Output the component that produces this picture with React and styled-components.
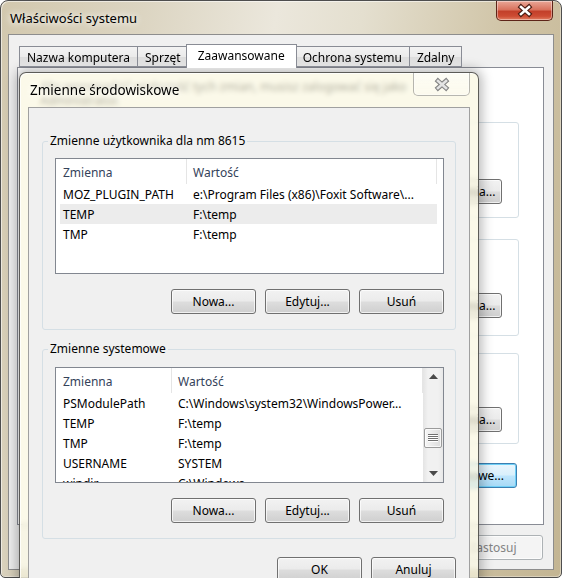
import React from "react";
import styled, { createGlobalStyle } from "styled-components";

const GlobalStyle = createGlobalStyle`
  html, body {
    margin: 0;
    padding: 0;
    background: #ffffff;
    overflow: hidden;
  }
  body {
    font-family: "Noto Sans", "Liberation Sans", sans-serif;
    font-size: 12px;
    color: #000;
  }
  * {
    box-sizing: border-box;
  }
`;

const Screen = styled.div`
  position: relative;
  width: 562px;
  height: 578px;
  overflow: hidden;
`;

// outer window: Właściwości systemu
const Window = styled.div`
  width: 562px;
  height: 578px;
  display: flex;
  flex-direction: column;
  padding: 0 7px 7px 7px;
  border: 1px solid #4e4e4e;
  border-radius: 8px 8px 5px 5px;
  background: linear-gradient(100deg, #d2c8ae 0%, #dcd5c2 22%, #ebe7dc 42%, #e4dfcf 55%, #cfc3a5 78%, #c3b593 100%);
  box-shadow: inset 1px 1px 0 rgba(255, 255, 255, 0.55), inset -1px -1px 0 rgba(255, 255, 255, 0.35);
`;

const TitleBar = styled.div`
  height: 33px;
  flex: none;
  display: flex;
  justify-content: space-between;
  align-items: flex-start;
`;

const Caption = styled.div`
  line-height: 35px;
  padding-left: 2px;
  font-size: ${(p) => p.$size}px;
  white-space: nowrap;
  text-shadow: 0 0 6px #fff, 0 0 10px rgba(255, 255, 255, 0.8);
`;

const CloseButton = styled.div`
  width: 57px;
  height: ${(p) => (p.$inactive ? 23 : 20)}px;
  margin-right: ${(p) => (p.$inactive ? 0 : 1)}px;
  display: flex;
  align-items: center;
  justify-content: center;
  border: 1px solid ${(p) => (p.$inactive ? "rgba(0, 0, 0, 0.28)" : "#5d2418")};
  border-top: none;
  border-radius: 0 0 5px 5px;
  background: ${(p) =>
    p.$inactive
      ? "linear-gradient(rgba(255,255,255,0.55), rgba(255,255,255,0.2))"
      : "linear-gradient(#e9a797 0%, #d9735e 45%, #c3402a 55%, #cd4c33 80%, #e27f63 100%)"};
  box-shadow: inset 0 0 0 1px rgba(255, 255, 255, 0.4);
`;

const Panel = styled.div`
  flex: 1;
  display: flex;
  flex-direction: column;
  background: #f0f0f0;
  border: 1px solid #8d8d8d;
  padding: 9px 9px 9px 8px;
`;

const TabStrip = styled.div`
  height: 23px;
  flex: none;
  display: flex;
  align-items: flex-end;
  padding-left: 2px;
  position: relative;
  z-index: 2;
`;

const Tab = styled.div`
  height: ${(p) => (p.$active ? 24 : 21)}px;
  margin: 0 ${(p) => (p.$active ? -2 : -1)}px ${(p) => (p.$active ? -1 : 0)}px ${(p) => (p.$active ? -2 : 0)}px;
  padding: ${(p) => (p.$active ? "0 11px 3px" : "2px 7px 0")};
  display: flex;
  align-items: center;
  white-space: nowrap;
  border: 1px solid #898c95;
  border-bottom: ${(p) => (p.$active ? "none" : "1px solid #898c95")};
  background: ${(p) =>
    p.$active ? "#ffffff" : "linear-gradient(#f3f3f3 0%, #ebebeb 50%, #dddddd 51%, #e2e2e2 100%)"};
  position: relative;
  z-index: ${(p) => (p.$active ? 2 : 1)};
`;

const TabPage = styled.div`
  flex: 1;
  display: flex;
  flex-direction: column;
  background: #ffffff;
  border: 1px solid #898c95;
  padding: 12px 24px 0 22px;
`;

const Info = styled.p`
  margin: 0;
  line-height: 14px;
`;

// group boxes of the tab page, mostly hidden under the dialog
const PageGroup = styled.div`
  margin-top: ${(p) => p.$mt}px;
  height: ${(p) => p.$h}px;
  display: flex;
  flex-direction: column;
  justify-content: flex-end;
  padding: 0 16px ${(p) => p.$pb}px 12px;
  border: 1px solid #d5dfe5;
  border-radius: 3px;
`;

const ButtonRow = styled.div`
  display: flex;
  justify-content: flex-end;
  gap: 9px;
  margin-top: ${(p) => p.$mt || 0}px;
  padding-right: ${(p) => p.$pr || 0}px;
  flex: none;
`;

const Button = styled.button`
  width: ${(p) => (p.$w ? `${p.$w}px` : "auto")};
  height: 25px;
  padding: 0 ${(p) => (p.$w ? 0 : 12)}px;
  display: flex;
  align-items: center;
  justify-content: center;
  font: inherit;
  white-space: nowrap;
  color: ${(p) => (p.disabled ? "#838383" : "#000")};
  border: 1px solid ${(p) => (p.$focus ? "#3c7fb1" : p.disabled ? "#adb2b5" : "#707070")};
  border-radius: 3px;
  background: ${(p) =>
    p.disabled
      ? "#f4f4f4"
      : p.$focus
      ? "linear-gradient(#eaf6fd 0%, #d9f0fc 48%, #bee6fd 52%, #a7d9f5 100%)"
      : "linear-gradient(#f2f2f2 0%, #ebebeb 48%, #dddddd 52%, #cfcfcf 100%)"};
  box-shadow: inset 0 0 0 1px ${(p) => (p.$focus ? "#6fd0f7" : "rgba(255, 255, 255, 0.7)")};
`;

const Footer = styled.div`
  flex: none;
  display: flex;
  justify-content: flex-end;
  gap: ${(p) => p.$gap}px;
  margin-top: ${(p) => p.$mt}px;
  padding-right: ${(p) => p.$pr || 0}px;
`;

// inner dialog: Zmienne środowiskowe
const Dialog = styled.div`
  position: absolute;
  left: 19px;
  top: 72px;
  width: 460px;
  display: flex;
  flex-direction: column;
  padding: 0 8px 8px;
  border: 1px solid rgba(30, 30, 30, 0.72);
  border-radius: 7px 7px 0 0;
  background: rgba(250, 246, 224, 0.7);
  backdrop-filter: blur(2.5px);
  box-shadow: 0 0 12px 3px rgba(0, 0, 0, 0.28), inset 1px 1px 0 rgba(255, 255, 255, 0.8);
`;

const DialogTitle = styled.div`
  height: 34px;
  flex: none;
  display: flex;
  justify-content: space-between;
  align-items: flex-start;
`;

const DialogBody = styled.div`
  background: #f0f0f0;
  border: 1px solid #a0a0a0;
  padding: 25px 13px 12px 13px;
`;

const Group = styled.fieldset`
  margin: ${(p) => p.$mt}px 0 0;
  padding: 0;
  min-width: 0;
  border: 1px solid #d5dfe5;
  border-radius: 3px;
`;

const Legend = styled.legend`
  margin-left: 5px;
  padding: 0 2px;
  line-height: 16px;
`;

const GroupBody = styled.div`
  padding: ${(p) => p.$pt}px 11px 15px 12px;
`;

const ListFrame = styled.div`
  height: 116px;
  display: flex;
  border: 1px solid #828790;
  background: #ffffff;
`;

const ListMain = styled.div`
  flex: 1;
  min-width: 0;
  overflow: hidden;
`;

const HeaderRow = styled.div`
  display: flex;
  height: 25px;
`;

const HeaderCell = styled.div`
  width: ${(p) => p.$w}px;
  flex: none;
  display: flex;
  align-items: center;
  padding: 1px 0 0 ${(p) => p.$pl}px;
  border-right: 1px solid #e5e5e5;
  color: #34425a;
`;

const Row = styled.div`
  display: flex;
  align-items: center;
  height: 20px;
  margin-left: 4px;
  width: ${(p) => p.$w}px;
  background: ${(p) => (p.$sel ? "#ececec" : "transparent")};
  white-space: nowrap;
`;

const NameCell = styled.div`
  width: ${(p) => p.$w}px;
  flex: none;
  padding-left: 3px;
  overflow: hidden;
`;

const ValueCell = styled.div`
  flex: 1;
  padding-left: 6px;
  overflow: hidden;
`;

const ScrollBar = styled.div`
  width: 20px;
  flex: none;
  display: flex;
  flex-direction: column;
  background: linear-gradient(to right, #e4e4e4, #f1f1f1 25%, #f1f1f1 75%, #e8e8e8);
`;

const Arrow = styled.div`
  height: 17px;
  display: flex;
  align-items: center;
  justify-content: center;
`;

const Track = styled.div`
  flex: 1;
  padding: 0 1px;
`;

const Thumb = styled.div`
  height: 20px;
  display: flex;
  align-items: center;
  justify-content: center;
  border: 1px solid #9b9b9b;
  border-radius: 2px;
  background: linear-gradient(to right, #f6f6f6, #e9e9e9 50%, #dcdcdc);
  box-shadow: inset 0 0 0 1px rgba(255, 255, 255, 0.7);
`;

const XGlyph = ({ fill, outline }) => (
  <svg width="20" height="15" viewBox="0 0 20 15">
    <path d="M6 4 L14 11 M14 4 L6 11" stroke={outline} strokeWidth="4.8" strokeLinecap="square" fill="none" />
    <path d="M6 4 L14 11 M14 4 L6 11" stroke={fill} strokeWidth="2.6" strokeLinecap="square" fill="none" />
  </svg>
);

const ArrowGlyph = ({ down }) => (
  <svg width="9" height="5" viewBox="0 0 9 5">
    <polygon points={down ? "0,0 9,0 4.5,5" : "0,5 9,5 4.5,0"} fill="#4a4a4a" />
  </svg>
);

const Grip = () => (
  <svg width="10" height="9" viewBox="0 0 10 9">
    {[0, 2, 4, 6].map((y) => (
      <g key={y}>
        <rect x="0" y={y} width="10" height="1" fill="#6f6f6f" />
        <rect x="0" y={y + 1} width="10" height="1" fill="#ffffff" />
      </g>
    ))}
  </svg>
);

const ListView = ({ cols, rows, selected, scroll }) => {
  const [c1, c2] = cols;
  return (
    <ListFrame>
      <ListMain>
        <HeaderRow>
          <HeaderCell $w={c1} $pl={7}>Zmienna</HeaderCell>
          <HeaderCell $w={c2} $pl={6}>Wartość</HeaderCell>
        </HeaderRow>
        {rows.map(([name, value], i) => (
          <Row key={name + i} $w={c1 + c2 - 4} $sel={i === selected}>
            <NameCell $w={c1 - 4}>{name}</NameCell>
            <ValueCell>{value}</ValueCell>
          </Row>
        ))}
      </ListMain>
      {scroll && (
        <ScrollBar>
          <Arrow>
            <ArrowGlyph />
          </Arrow>
          <Track>
            <Thumb style={{ marginTop: scroll }}>
              <Grip />
            </Thumb>
          </Track>
          <Arrow>
            <ArrowGlyph down />
          </Arrow>
        </ScrollBar>
      )}
    </ListFrame>
  );
};

const userVars = [
  ["MOZ_PLUGIN_PATH", "e:\\Program Files (x86)\\Foxit Software\\..."],
  ["TEMP", "F:\\temp"],
  ["TMP", "F:\\temp"],
];

const systemVars = [
  ["PSModulePath", "C:\\Windows\\system32\\WindowsPower..."],
  ["TEMP", "F:\\temp"],
  ["TMP", "F:\\temp"],
  ["USERNAME", "SYSTEM"],
  ["windir", "C:\\Windows"],
];

const tabs = ["Nazwa komputera", "Sprzęt", "Zaawansowane", "Ochrona systemu", "Zdalny"];

const App = () => {
  return (
    <Screen>
      <GlobalStyle />
      <Window>
        <TitleBar>
          <Caption $size={13}>Właściwości systemu</Caption>
          <CloseButton>
            <XGlyph fill="#ffffff" outline="#4a1c12" />
          </CloseButton>
        </TitleBar>
        <Panel>
          <TabStrip>
            {tabs.map((t) => (
              <Tab key={t} $active={t === "Zaawansowane"}>
                {t}
              </Tab>
            ))}
          </TabStrip>
          <TabPage>
            <Info>
              Aby wprowadzić większość tych zmian, musisz zalogować się jako
              <br />
              Administrator.
            </Info>
            <PageGroup $mt={14} $h={96} $pb={13}>
              <ButtonRow>
                <Button $w={85}>Ustawienia...</Button>
              </ButtonRow>
            </PageGroup>
            <PageGroup $mt={21} $h={97} $pb={17}>
              <ButtonRow>
                <Button $w={85}>Ustawienia...</Button>
              </ButtonRow>
            </PageGroup>
            <PageGroup $mt={17} $h={91} $pb={11}>
              <ButtonRow>
                <Button $w={85}>Ustawienia...</Button>
              </ButtonRow>
            </PageGroup>
            <ButtonRow $mt={19} $pr={2}>
              <Button $focus>Zmienne środowiskowe...</Button>
            </ButtonRow>
          </TabPage>
          <Footer $gap={8} $mt={10} $pr={1}>
            <Button $w={85}>OK</Button>
            <Button $w={85}>Anuluj</Button>
            <Button $w={100} disabled>
              Zastosuj
            </Button>
          </Footer>
        </Panel>
      </Window>

      <Dialog>
        <DialogTitle>
          <Caption $size={13.5}>Zmienne środowiskowe</Caption>
          <CloseButton $inactive>
            <XGlyph fill="#e4e4e4" outline="#858585" />
          </CloseButton>
        </DialogTitle>
        <DialogBody>
          <Group $mt={0}>
            <Legend>Zmienne użytkownika dla nm 8615</Legend>
            <GroupBody $pt={9}>
              <ListView cols={[131, 250]} rows={userVars} selected={1} />
              <ButtonRow $mt={15}>
                <Button $w={85}>Nowa...</Button>
                <Button $w={85}>Edytuj...</Button>
                <Button $w={85}>Usuń</Button>
              </ButtonRow>
            </GroupBody>
          </Group>
          <Group $mt={11}>
            <Legend>Zmienne systemowe</Legend>
            <GroupBody $pt={10}>
              <ListView cols={[116, 251]} rows={systemVars} selected={-1} scroll={43} />
              <ButtonRow $mt={15}>
                <Button $w={85}>Nowa...</Button>
                <Button $w={85}>Edytuj...</Button>
                <Button $w={85}>Usuń</Button>
              </ButtonRow>
            </GroupBody>
          </Group>
          <Footer $gap={9} $mt={18}>
            <Button $w={85}>OK</Button>
            <Button $w={85}>Anuluj</Button>
          </Footer>
        </DialogBody>
      </Dialog>
    </Screen>
  );
};

export default App;
